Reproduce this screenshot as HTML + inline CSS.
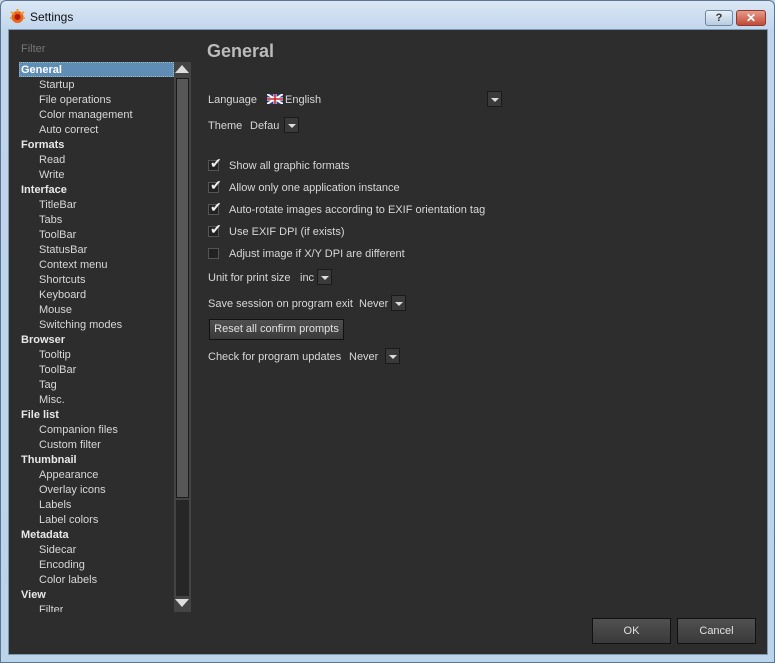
<!DOCTYPE html>
<html><head><meta charset="utf-8"><style>
*{margin:0;padding:0;box-sizing:border-box}
body{width:775px;height:663px;overflow:hidden;background:#c4d8ec;font-family:"Liberation Sans",sans-serif;font-size:11px;color:#d8d8d8;position:relative}
.frame{position:absolute;left:0;top:0;width:775px;height:663px;background:linear-gradient(#dbe7f4,#c0d5ec 30px,#bcd3ea);border:1px solid #5a7690;border-radius:6px 6px 0 0}
.title{position:absolute;left:30px;top:10px;font-size:12px;color:#111}
.content{position:absolute;left:8px;top:29px;width:760px;height:626px;background:#2d2d2d;border:1px solid #7f99b3}
.a{position:absolute;white-space:nowrap}
.tree div{position:absolute;white-space:nowrap;height:15px;line-height:15px}
.b{font-weight:bold;left:21px;color:#e8e8e8}
.s{left:39px}
.cb{position:absolute;width:11px;height:11px;background:#222;border:1px solid #555;left:208px}
.ck{position:absolute;left:1px;top:-6px;font-size:14px;color:#eee}
.dd{position:absolute;width:15px;height:16px;background:#3a3a3a;border:1px solid #1a1a1a}
.dd:after{content:"";position:absolute;left:3px;top:6px;border-left:4px solid transparent;border-right:4px solid transparent;border-top:4px solid #ddd}
.btn{position:absolute;background:linear-gradient(#505050,#3a3a3a);border:1px solid #111;text-align:center;color:#e0e0e0}
</style></head><body>
<div class="frame"></div>
<svg style="position:absolute;left:9px;top:8px" width="17" height="17" viewBox="0 0 17 17"><circle cx="8.5" cy="9" r="6" fill="#e9661b"/><circle cx="8.5" cy="9" r="3" fill="#b01a10"/><path d="M2 4L5 6M15 4L12 6M8.5 1V4M1 10H3M14 10H16" stroke="#f0a030" stroke-width="2"/></svg>
<div class="title">Settings</div>
<div style="position:absolute;left:705px;top:10px;width:28px;height:16px;border:1px solid #6e87a0;border-radius:3px;background:linear-gradient(#e8f0f8,#b8cce0);color:#333;text-align:center;font-weight:bold;font-size:11px;line-height:14px">?</div>
<div style="position:absolute;left:736px;top:10px;width:30px;height:16px;border:1px solid #8a3a30;border-radius:3px;background:linear-gradient(#e89a8a,#c24a38);color:#fff;text-align:center;font-weight:bold;font-size:12px;line-height:14px">✕</div>
<div class="content"></div>
<div class="a" style="left:21px;top:43px;color:#777">Filter</div>
<div style="position:absolute;left:19px;top:62px;width:155px;height:15px;background:#5f8db5;border:1px dotted #9bb"></div>
<div class="tree" style="position:absolute;left:0;top:1px">
<div class="b" style="top:62px;color:#fff">General</div>
<div class="s" style="top:77px">Startup</div>
<div class="s" style="top:92px">File operations</div>
<div class="s" style="top:107px">Color management</div>
<div class="s" style="top:122px">Auto correct</div>
<div class="b" style="top:137px">Formats</div>
<div class="s" style="top:152px">Read</div>
<div class="s" style="top:167px">Write</div>
<div class="b" style="top:182px">Interface</div>
<div class="s" style="top:197px">TitleBar</div>
<div class="s" style="top:212px">Tabs</div>
<div class="s" style="top:227px">ToolBar</div>
<div class="s" style="top:242px">StatusBar</div>
<div class="s" style="top:257px">Context menu</div>
<div class="s" style="top:272px">Shortcuts</div>
<div class="s" style="top:287px">Keyboard</div>
<div class="s" style="top:302px">Mouse</div>
<div class="s" style="top:317px">Switching modes</div>
<div class="b" style="top:332px">Browser</div>
<div class="s" style="top:347px">Tooltip</div>
<div class="s" style="top:362px">ToolBar</div>
<div class="s" style="top:377px">Tag</div>
<div class="s" style="top:392px">Misc.</div>
<div class="b" style="top:407px">File list</div>
<div class="s" style="top:422px">Companion files</div>
<div class="s" style="top:437px">Custom filter</div>
<div class="b" style="top:452px">Thumbnail</div>
<div class="s" style="top:467px">Appearance</div>
<div class="s" style="top:482px">Overlay icons</div>
<div class="s" style="top:497px">Labels</div>
<div class="s" style="top:512px">Label colors</div>
<div class="b" style="top:527px">Metadata</div>
<div class="s" style="top:542px">Sidecar</div>
<div class="s" style="top:557px">Encoding</div>
<div class="s" style="top:572px">Color labels</div>
<div class="b" style="top:587px">View</div>
<div class="s" style="top:602px;height:9px;overflow:hidden">Filter</div>
</div>
<div style="position:absolute;left:174px;top:62px;width:17px;height:550px;background:#444"></div>
<div style="position:absolute;left:176px;top:78px;width:13px;height:420px;background:#575757;border:1px solid #1a1a1a"></div>
<div style="position:absolute;left:176px;top:500px;width:13px;height:96px;background:#262626"></div>
<div style="position:absolute;left:175px;top:65px;border-left:7px solid transparent;border-right:7px solid transparent;border-bottom:8px solid #ddd"></div>
<div style="position:absolute;left:175px;top:599px;border-left:7px solid transparent;border-right:7px solid transparent;border-top:8px solid #ddd"></div>
<div class="a" style="left:207px;top:41px;font-size:18px;font-weight:bold;color:#bbb">General</div>
<div class="a" style="left:208px;top:94px">Language</div>
<svg style="position:absolute;left:267px;top:94px" width="16" height="10" viewBox="0 0 16 10"><rect width="16" height="10" fill="#2a3d8f"/><path d="M0 0L16 10M16 0L0 10" stroke="#fff" stroke-width="2"/><path d="M8 0V10M0 5H16" stroke="#fff" stroke-width="3"/><path d="M8 0V10M0 5H16" stroke="#d0202a" stroke-width="1.6"/></svg>
<div class="a" style="left:285px;top:94px">English</div>
<div class="dd" style="left:487px;top:91px"></div>
<div class="a" style="left:208px;top:120px">Theme</div>
<div class="a" style="left:250px;top:120px">Defau</div>
<div class="dd" style="left:284px;top:117px"></div>
<div class="cb" style="top:160px"><span class="ck">✔</span></div><div class="a" style="left:229px;top:160px">Show all graphic formats</div>
<div class="cb" style="top:182px"><span class="ck">✔</span></div><div class="a" style="left:229px;top:182px">Allow only one application instance</div>
<div class="cb" style="top:204px"><span class="ck">✔</span></div><div class="a" style="left:229px;top:204px">Auto-rotate images according to EXIF orientation tag</div>
<div class="cb" style="top:226px"><span class="ck">✔</span></div><div class="a" style="left:229px;top:226px">Use EXIF DPI (if exists)</div>
<div class="cb" style="top:248px"></div><div class="a" style="left:229px;top:248px">Adjust image if X/Y DPI are different</div>
<div class="a" style="left:208px;top:272px">Unit for print size</div>
<div class="a" style="left:300px;top:272px">inc</div>
<div class="dd" style="left:317px;top:269px"></div>
<div class="a" style="left:208px;top:298px">Save session on program exit</div>
<div class="a" style="left:359px;top:298px">Never</div>
<div class="dd" style="left:391px;top:295px"></div>
<div class="btn" style="left:209px;top:319px;width:135px;height:21px;line-height:19px">Reset all confirm prompts</div>
<div class="a" style="left:208px;top:351px">Check for program updates</div>
<div class="a" style="left:349px;top:351px">Never</div>
<div class="dd" style="left:385px;top:348px"></div>
<div class="btn" style="left:592px;top:618px;width:79px;height:26px;line-height:25px">OK</div>
<div class="btn" style="left:677px;top:618px;width:79px;height:26px;line-height:25px">Cancel</div>
</body></html>
